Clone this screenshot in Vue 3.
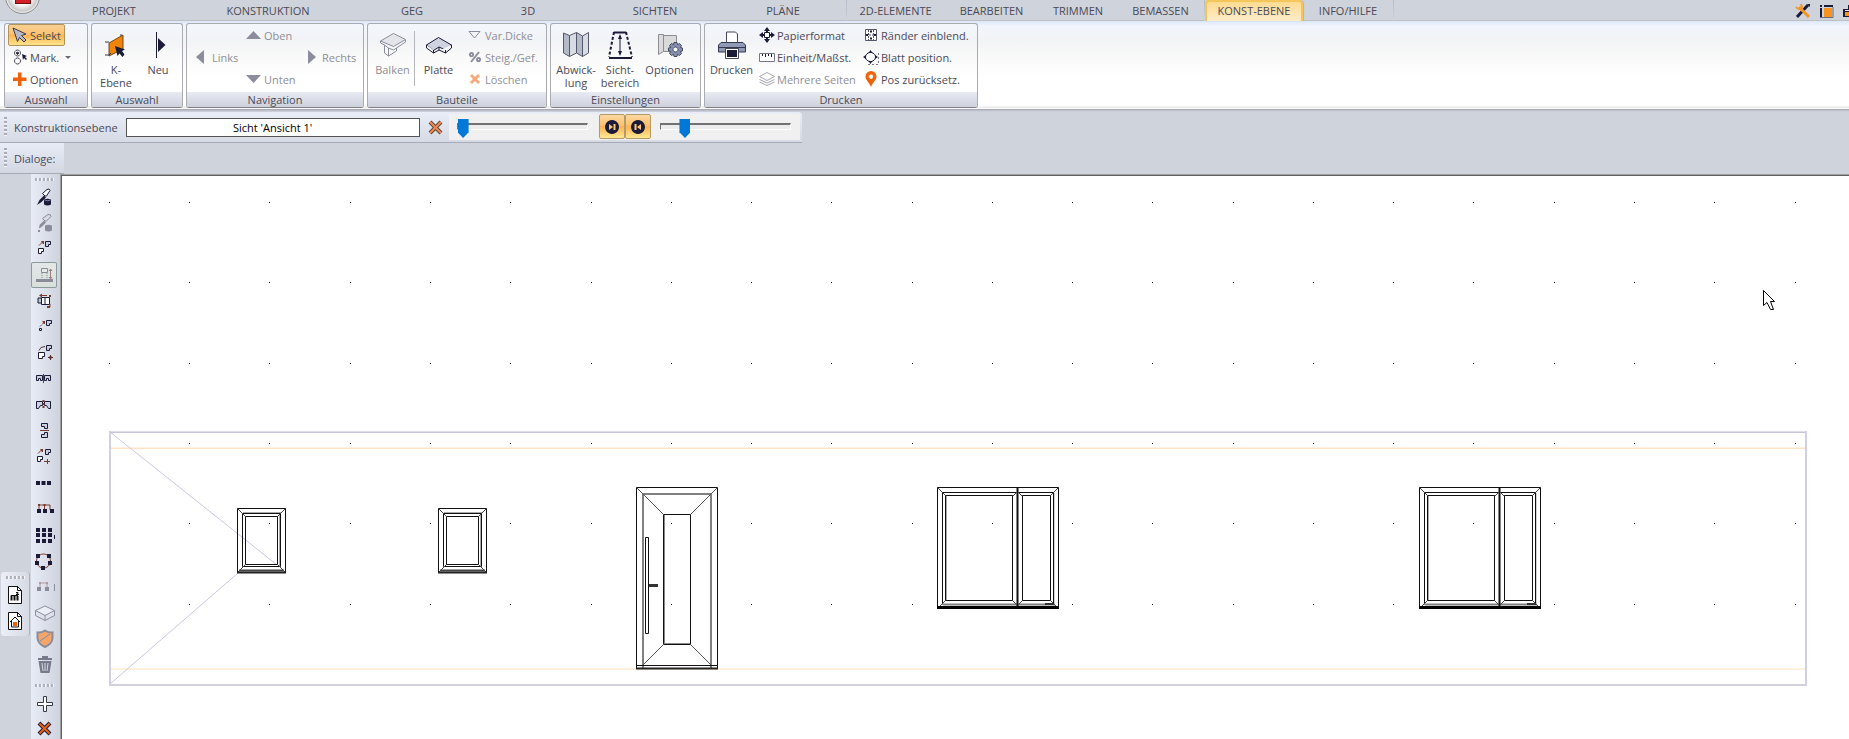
<script setup>
import { h, ref } from 'vue'

const N = '#1b1b38'
const G = '#8b8d9c'
const O = '#ee6309'
const B = '#7a3b2e'

/* Each icon is a list of [path, fill, stroke, stroke width, dash]. */
const sq = (x, y, s = 3) => `M${x} ${y}h${s}v${s}h${-s}z`
const cornerShape = (x, y, s = 5) => `M${x} ${y}h${s}v${s - 2}h-2v2h${-(s - 2)}z`

const icons = {
  /* ribbon, 16 x 16 */
  select: [['M1 1L14 7L9.5 8.5L14 13L12 15L7.5 10.5L5.5 14.5z', '#b9bac6', '#3a3a4a', 1]],
  mark: [
    ['M5.5 1a3 3 0 1 0 .01 0zM5.5 9a3 3 0 1 0 .01 0z', '#fff', '#4a4a5a', 1],
    ['M5.5 3.2a1 1 0 1 0 .01 0z', N, N, 1],
    ['M10 5l5 2l-2 1l2 2l-1 1l-2-2l-1 2z', N],
  ],
  plus: [['M6 1.500h3.500v5h5v3.500h-5v5h-3.500v-5h-5v-3.500h5z', O]],
  up: [['M0 12L7.5 4L15 12z', G]],
  down: [['M0 4h15L7.5 12z', G]],
  left: [['M10 1v14L2 8z', G]],
  right: [['M4 1v14L12 8z', G]],
  thickness: [['M2 4.5h11L7.5 11z', '#f4f4f6', G, 1]],
  percent: [
    ['M12 3L4 13', 'none', G, 2],
    ['M4.5 4a1.6 1.6 0 1 0 .01 0zM11.5 9a1.6 1.6 0 1 0 .01 0z', 'none', G, 2],
  ],
  del: [['M4 4L12 12M12 4L4 12', 'none', '#f5aa7c', 3]],
  paper: [
    ['M8 0l3 4h-6zM8 16l3-4h-6zM0 8l4-3v6zM16 8l-4-3v6z', N],
    ['M5.5 5.5h5v5h-5z', '#fff', N, 1],
    ['M7 2h2v3h-2zM7 11h2v3h-2zM2 7h3v2h-3zM11 7h3v2h-3z', N],
  ],
  ruler: [
    ['M.5 4.500h15v8h-15z', '#fff', '#77778a', 1],
    ['M3.500 5v2M6.500 5v3M9.500 5v2M12.500 5v3', 'none', N, 1],
  ],
  pages: [
    ['M8 1.500L15.500 5.500L8 9.500L.5 5.500z', '#fff', '#a5a6ae', 1],
    ['M.5 8.500L8 12L15.500 8.500M.5 11L8 14.500L15.500 11', 'none', '#a5a6ae', 1],
  ],
  margins: [
    ['M2.500 2.500h11v11h-11z', '#fff', '#55556a', 1],
    ['M5.500 3v10M10.500 3v10M3 8h10', 'none', '#55556a', 1, '2 1'],
    ['M8 3.500v2M8 10.500v2', 'none', N, 2],
    ['M3 8h2M11 8h2', 'none', N, 2],
  ],
  sheet: [
    ['M15.500 4v11.500h-12', 'none', '#77778a', 1, '2 2'],
    ['M7.500 3.500a5 4.500 0 1 0 .01 0z', '#fff', N, 1],
    ['M7.500 1l2 3h-4zM7.500 15l2-3h-4zM0 8l3-2v4zM15 8l-3-2v4z', N],
  ],
  pin: [
    ['M8 0a5.500 5.500 0 0 0-5.500 5.800C2.500 9 6.500 12 8 16C9.500 12 13.500 9 13.500 5.800A5.500 5.500 0 0 0 8 0z', O],
    ['M8 3.500a2.200 2.200 0 1 0 .01 0z', '#fff'],
  ],
  /* ribbon, 28 x 28 */
  plane: [
    ['M7 25V12L21 4V18z', '#ef8408', '#6b4a20', 1],
    ['M3 11h4M3 24h4L9 22M19 5V3', 'none', '#3a3a4a', 1],
    ['M13 15L23 18.500L20 20L22.500 23.500L20.500 26L17.500 22.500L15.500 25z', N],
  ],
  neu: [['M14 7L21.500 14L14 21z', N], ['M12.500 1V27', 'none', N, 1]],
  beam: [
    ['M1.500 10L14.500 2.500L26.500 8.500L14.500 15.500z', '#e4e5ea', G, 1],
    ['M1.500 10v2L5.500 14v8L9.500 25v-8L14.500 19L26.500 11v-2M9.500 25L17.500 20v-3M5.500 14l4 3', 'none', G, 1],
  ],
  slab: [
    ['M1.500 14L13.500 6.500L26.500 14L20.500 19L14 16L8.500 19.500z', '#cfd3e0', N, 1],
    ['M1.500 14v3L8.500 22v-3M8.500 22L14 19L20.500 22L26.500 17v-3M20.500 19v3M14 16v3', '#f5f5fa', N, 1],
  ],
  map: [
    ['M1.500 2L7.500 4.500V25.500L1.500 22zM14.500 1.500L20.500 5V25.500L14.500 22z', '#b4bac8', '#55586a', 1],
    ['M7.500 4.500L14.500 1.500V22L7.500 25.500zM20.500 5L26.500 1.500V22L20.500 25.500z', '#d8dce5', '#55586a', 1],
  ],
  range: [
    ['M8 1.500H20M3 27H26', 'none', N, 2],
    ['M8 1L3 26M20 1L26 26', 'none', N, 2, '3 2'],
    ['M14 5V23', 'none', N, 1],
    ['M14 3l2 5h-4zM14 25l2-5h-4z', N],
  ],
  gearpage: [
    ['M2.500 3.500h5v17l-5 3zM7.500 4.500h13v16h-13z', '#dadada', '#8c8c92', 1],
    ['M18 11.500h3l.5 2.200l2-1.200l2 2l-1.200 2l2.200.5v3l-2.200.5l1.200 2l-2 2l-2-1.200l-.5 2.200h-3l-.5-2.200l-2 1.200l-2-2l1.200-2l-2.200-.5v-3l2.200-.5l-1.200-2l2-2l2 1.200z', '#858fae', '#454a60', 1],
    ['M19.500 16a2.500 2.500 0 1 0 .01 0z', '#fff', '#454a60', 1],
  ],
  printer: [
    ['M8.500 12V1h9l2 2V12', '#fff', '#45485a', 1],
    ['M3 11.500h22l2.500 2.500v7h-27v-7z', '#8f9bb4', '#353850', 1],
    ['M1 16.500h26', 'none', '#353850', 1],
    ['M7.500 17.500h13v10h-13z', '#fff', '#45485a', 1],
    ['M9 19h10v7h-10z', N],
  ],
  /* palettes, 26 x 26 */
  pipette: [
    ['M6 21L8.500 16L13 11.500L15 13.500L10.500 18z', N],
    ['M14 12L11.500 9.500L16 5.500Q18.500 4 19 6.500L15.500 12z', '#fff', N, 1],
    ['M13 15.500q3.500-1.500 7 0v5q-3.500 2-7 0z', N],
    ['M13.500 16q3 1.500 6 0', 'none', '#8085a8', 1],
  ],
  pipetteOff: [
    ['M8 18.500L8.500 15L13 10.500L15 12.500L10.500 17zM7 20h2v2h-2z', G],
    ['M14 11L11.500 8.500L17 4.500Q20 4 20 6.500L15.500 11z', '#d8dae4', G, 1],
    ['M14 15.500q3.500-1.500 7 0v5q-3.500 2-7 0z', G],
  ],
  move: [
    [cornerShape(14.5, 5.5), '#c8cede', N, 1], [cornerShape(7.5, 12.5), '#fff', N, 1],
    ['M8 9.500L12 5.500', 'none', B, 1], ['M10 5h3v3h-1z', B],
  ],
  lift: [
    ['M10.500 6.500h6v4h-6z', '#e6e9ea', '#8a8d98', 1],
    ['M11 11v6M16 11v6', 'none', '#8a8d98', 1, '1 1'],
    ['M5 17h17v3h-17z', '#8a8d98'],
    ['M19.500 8v8M18 9l1.500-2l1.500 2M18 15l1.500 2l1.500-2', 'none', '#987c80', 1],
  ],
  stretch: [
    ['M10.500 9.500h8v7h-8z', '#fff', N, 1], ['M10 10h-3v5h3M14 9.500v7', '#b9c4d4', N, 1],
    ['M10 7.500h6M19 16v3', 'none', B, 1], ['M8 7.500l3-2v4zM19 18h-3v2h3zM18 7h2v2h-2z', B],
  ],
  copyOne: [
    [cornerShape(15.5, 6.5), '#c8cede', N, 1], [sq(8.5, 14.5, 2), '#fff', N, 1],
    ['M9 12.500L13 8.500', 'none', B, 1, '2 1'], ['M11 7h3v3h-1z', B],
  ],
  rotate: [
    [cornerShape(15.5, 5.5), '#c8cede', N, 1], [cornerShape(7.5, 12.5, 6), '#fff', N, 1],
    ['M8 10.500Q9 6.500 14 6.500M17 17.500h5M19.500 15v5', 'none', '#5b3030', 1],
    ['M18 16.500h3v2h-3z', '#5b3030'],
  ],
  mirror: [
    ['M5.500 9.500h6v5h-2v-2h-2v2h-2zM13.500 9.500h6v5h-2v-2h-2v2h-2z', '#cdd2e0', N, 1],
    ['M12.500 8v9', 'none', B, 1],
  ],
  mirrorCopy: [
    ['M5.500 9.500h6v4h-2l-2 3h-2zM13.500 9.500h6v7h-2l-2-3h-2z', '#cdd2e0', N, 1],
    ['M12.500 8v9', 'none', B, 2, '2 1'],
  ],
  flip: [
    ['M10.500 5.500h6v5h-3v-2h-3zM10.500 19.500h6v-5h-3v2h-3z', '#cdd2e0', N, 1],
    ['M9 12.500h9', 'none', B, 1],
  ],
  movePlus: [
    [cornerShape(14.5, 5.5), '#c8cede', N, 1], [cornerShape(6.5, 12.5), '#fff', N, 1],
    ['M7 9.500L11 5.500M13 17.500h6M16.500 15v5', 'none', B, 1], ['M9 5h3v3h-1z', B],
  ],
  rowOf: [[sq(6, 12, 2) + sq(11.5, 12, 2) + sq(17, 12, 2), '#fff', N, 2]],
  tree: [
    ['M8 14v-5h11v5M13.500 9v5', 'none', B, 1], [sq(7, 8, 2) + sq(12.5, 8, 2), B],
    [sq(7, 14, 2) + sq(13, 14, 2) + sq(20, 14, 2), '#fff', N, 2],
  ],
  matrix: [
    [[7, 12, 18].map(y => sq(6, y, 2) + sq(12, y, 2) + sq(18, y, 2)).join(''), '#d0d4e4', N, 2],
    ['M23.500 13v4', 'none', N, 1],
  ],
  ring: [
    ['M12.500 6a7 7 0 1 0 .01 0z', 'none', B, 1],
    [sq(5, 6, 4) + sq(16, 6, 4) + sq(4, 13, 4) + sq(17, 13, 4) + sq(10, 18, 4), N],
  ],
  treeOff: [
    ['M9 14v-5h7v5', 'none', '#b09aa0', 1], [sq(8, 8, 2) + sq(15, 8, 2), '#b09aa0'],
    [sq(7, 14, 2) + sq(15, 14, 2), '#fff', G, 2], ['M23.500 10v7', 'none', G, 1],
  ],
  block: [
    ['M4.500 10.500v5L14 20.500L23.500 15.500v-5M14 15.500v5', '#dfe2ec', G, 1],
    ['M4.500 10.500L14 6L23.500 10.500L14 15.500z', '#eceef5', G, 1],
  ],
  shield: [
    ['M14 4.500Q18 7 21.500 6.500V12Q21 18 14 21Q7 18 6.500 12V6.500Q10 7 14 4.500z', '#f3a56c', G, 2],
    ['M9 15L19 8', 'none', G, 1],
  ],
  trash: [
    ['M7.500 9h13l-2 12h-9zM7 6h14v2h-14zM11 4h6v2h-6z', '#777a8b'],
    ['M11 11l1 8M14 11v8M17 11l-1 8', 'none', '#d6d8e2', 1],
  ],
  cross: [['M12.500 6.500h3v6h6v3h-6v6h-3v-6h-6v-3h6z', '#fff', '#35364e', 1]],
  close: [['M8 7L19 18M19 7L8 18', 'none', N, 4], ['M8.500 7.500L18.500 17.500M18.500 7.500L8.500 17.500', 'none', O, 2]],
  area: [
    ['M6.500 4.500h9l4 4v13h-13z', '#fff', '#111', 1], ['M15.500 4v4.500h4', 'none', '#111', 1],
    ['M9.500 18.500v-5M12.500 14v4.500M15.500 14v4.500', 'none', '#111', 2],
    ['M9 13.500h7M14 10.500h2v1l-2 1h3', 'none', '#111', 1],
  ],
  house: [
    ['M6.500 4.500h9l4 4v13h-13z', '#fff', '#111', 1], ['M15.500 4v4.500h4', 'none', '#111', 1],
    ['M8 14L13 9L18 14M9.500 13v6h7v-6', 'none', '#111', 1], [sq(11, 14, 4), O],
  ],
  /* toolbar and title bar */
  removeX: [['M3 3L14 14M14 3L3 14', 'none', '#5a4a48', 4], ['M3 3L14 14M14 3L3 14', 'none', '#f08a4c', 2]],
  stepNext: [['M8 1a7 7 0 1 0 .01 0z', N], ['M5 5v6l4-3z', '#fdc672'], ['M10.500 5v6', 'none', '#fdc672', 2]],
  stepPrev: [['M8 1a7 7 0 1 0 .01 0z', N], ['M11 5v6l-4-3z', '#fdc672'], ['M5.500 5v6', 'none', '#fdc672', 2]],
  tools: [
    ['M2 14L13 2', 'none', N, 3], ['M12 1h3v3z', N],
    ['M4 4L14 14', 'none', '#f7931e', 3], ['M1 4q3 4 6 0l-1-3', 'none', '#f7931e', 2],
  ],
  layout: [
    ['M1 2h2v2h-2zM5 2h9v2h-9zM1 5h2v9h-2z', N], ['M5 5h8v9h-8z', '#f7931e'], ['M14 4v10.500h-13', 'none', '#6b6b80', 1],
  ],
  toolbox: [['M0 6h16v8h-16zM5 2h7v4h-2v-2h-3v2h-2z', N], ['M2 9h12v4h-12z', '#f7931e'], ['M2 7.500h12', 'none', '#e8e8ee', 1]],
}

const Icon = ({ name, size }) =>
  h('svg', { width: size, height: size, viewBox: `0 0 ${size} ${size}`, 'aria-hidden': 'true' },
    icons[name].map(([d, fill, stroke, w, dash]) =>
      h('path', { d, fill, stroke, 'stroke-width': w, 'stroke-dasharray': dash })))
Icon.props = ['name', 'size']

const tabs = ['PROJEKT', 'KONSTRUKTION', 'GEG', '3D', 'SICHTEN', 'PLÄNE', '2D-ELEMENTE', 'BEARBEITEN', 'TRIMMEN', 'BEMASSEN', 'KONST-EBENE', 'INFO/HILFE']
const activeTab = ref('KONST-EBENE')
const dividerAfter = ['PLÄNE', 'BEMASSEN', 'INFO/HILFE']

const partActions = [['thickness', 'Var.Dicke'], ['percent', 'Steig./Gef.'], ['del', 'Löschen']]
const printActions = [
  ['paper', 'Papierformat'], ['margins', 'Ränder einblend.'],
  ['ruler', 'Einheit/Maßst.'], ['sheet', 'Blatt position.'],
  ['pages', 'Mehrere Seiten', true], ['pin', 'Pos zurücksetz.'],
]
const palette = ['pipette', 'pipetteOff', 'move', 'lift', 'stretch', 'copyOne', 'rotate', 'mirror', 'mirrorCopy', 'flip', 'movePlus', 'rowOf', 'tree', 'matrix', 'ring', 'treeOff', 'block', 'shield', 'trash']

const levelName = ref("Sicht 'Ansicht 1'")
const sliderA = ref(0)
const sliderB = ref(16)

/* Snap points of the drawing, in canvas pixels. */
const dots = []
for (let j = 0; j < 7; j++)
  for (let i = 0; i < 22; i++)
    dots.push(`M${Math.round(46.9 + 80.27 * i)} ${Math.round(26.2 + 80.27 * j)}h1v1h-1z`)
const dotPath = dots.join('')
const smallWindows = [175, 376]
const largeWindows = [875, 1357]
</script>

<template>
  <div class="app">
    <header class="titlebar">
      <button class="orb" aria-label="Hauptmenü"><span></span></button>
      <nav class="tabs">
        <button v-for="t in tabs" :key="t" class="tab" :class="{ active: t === activeTab, divider: dividerAfter.includes(t) }" @click="activeTab = t">{{ t }}</button>
      </nav>
      <div class="quick">
        <button aria-label="Werkzeuge"><Icon name="tools" :size="16" /></button>
        <button aria-label="Ansicht"><Icon name="layout" :size="16" /></button>
        <button aria-label="Werkzeugkasten"><Icon name="toolbox" :size="16" /></button>
      </div>
    </header>

    <section class="ribbon">
      <div class="panel p-select">
        <div class="body rows">
          <button class="small selected"><Icon name="select" :size="16" />Selekt</button>
          <button class="small"><Icon name="mark" :size="16" />Mark.<i class="caret"></i></button>
          <button class="small"><Icon name="plus" :size="16" />Optionen</button>
        </div>
        <h2>Auswahl</h2>
      </div>

      <div class="panel p-level">
        <div class="body">
          <button class="large"><Icon name="plane" :size="28" /><span>K-<br>Ebene</span></button>
          <button class="large"><Icon name="neu" :size="28" /><span>Neu</span></button>
        </div>
        <h2>Auswahl</h2>
      </div>

      <div class="panel p-nav">
        <div class="body nav-grid">
          <button class="small n-up" disabled><Icon name="up" :size="16" />Oben</button>
          <button class="small n-left" disabled><Icon name="left" :size="16" />Links</button>
          <button class="small n-right" disabled><Icon name="right" :size="16" />Rechts</button>
          <button class="small n-down" disabled><Icon name="down" :size="16" />Unten</button>
        </div>
        <h2>Navigation</h2>
      </div>

      <div class="panel p-parts">
        <div class="body">
          <button class="large" disabled><Icon name="beam" :size="28" /><span>Balken</span></button>
          <i class="rule"></i>
          <button class="large"><Icon name="slab" :size="28" /><span>Platte</span></button>
          <div class="stack">
            <button v-for="[icon, label] in partActions" :key="icon" class="small" disabled><Icon :name="icon" :size="16" />{{ label }}</button>
          </div>
        </div>
        <h2>Bauteile</h2>
      </div>

      <div class="panel p-settings">
        <div class="body">
          <button class="large"><Icon name="map" :size="28" /><span>Abwick-<br>lung</span></button>
          <button class="large"><Icon name="range" :size="28" /><span>Sicht-<br>bereich</span></button>
          <button class="large wide"><Icon name="gearpage" :size="28" /><span>Optionen</span></button>
        </div>
        <h2>Einstellungen</h2>
      </div>

      <div class="panel p-print">
        <div class="body">
          <button class="large"><Icon name="printer" :size="28" /><span>Drucken</span></button>
          <div class="print-grid">
            <button v-for="[icon, label, off] in printActions" :key="icon" class="small" :disabled="off"><Icon :name="icon" :size="16" />{{ label }}</button>
          </div>
        </div>
        <h2>Drucken</h2>
      </div>
    </section>

    <div class="toolbar level-bar">
      <i class="grip"></i>
      <label for="level">Konstruktionsebene</label>
      <input id="level" v-model="levelName" class="level" type="text">
      <button class="clear" aria-label="Ebene schließen"><Icon name="removeX" :size="17" /></button>
      <div class="sliders">
        <input v-model="sliderA" type="range" min="0" max="100" aria-label="Vordere Sichttiefe">
        <div class="steps">
          <button aria-label="Weiter"><Icon name="stepNext" :size="16" /></button>
          <button aria-label="Zurück"><Icon name="stepPrev" :size="16" /></button>
        </div>
        <input v-model="sliderB" type="range" min="0" max="100" aria-label="Hintere Sichttiefe">
      </div>
    </div>

    <div class="toolbar dialog-bar">
      <i class="grip"></i>
      <span>Dialoge:</span>
    </div>

    <main class="work">
      <div class="dock">
        <div class="side">
          <i class="hgrip"></i>
          <button aria-label="Flächen"><Icon name="area" :size="26" /></button>
          <button aria-label="Gebäude"><Icon name="house" :size="26" /></button>
        </div>
      </div>
      <div class="palette">
        <i class="hgrip"></i>
        <button v-for="p in palette" :key="p" :class="{ on: p === 'lift' }" :aria-label="p"><Icon :name="p" :size="26" /></button>
        <i class="hgrip second"></i>
        <button aria-label="Hinzufügen"><Icon name="cross" :size="26" /></button>
        <button aria-label="Abbrechen"><Icon name="close" :size="26" /></button>
      </div>
      <div class="canvas">
        <svg class="drawing" role="img" aria-label="Ansicht 1">
          <path :d="dotPath" fill="#000" />
          <g fill="none">
            <path d="M49 271.500H1743" stroke="#fff1e2" /><path d="M49 272.500H1743" stroke="#ffe3c6" />
            <path d="M49 493H1743" stroke="#ffefdc" stroke-width="2" />
            <path d="M47 255.500H1745" stroke="#dfdfe6" /><path d="M47 256.500H1745" stroke="#c6c6d8" />
            <path d="M47 509H1745" stroke="#d3d0d9" stroke-width="2" />
            <path d="M48 255V510M1744 255V510" stroke="#d0cfe5" stroke-width="2" />
            <path d="M48 256L215 389M48 508L176 397" stroke="#c9c8e2" />
          </g>
          <g v-for="x in smallWindows" :key="x" :transform="`translate(${x} 332)`" fill="none" stroke="#111">
            <path d="M.5.500h48v64h-48zM5.500 5.500h38v53h-38zM8.500 8.500h32v48h-32z" />
            <path d="M42.500 6v52M6 4.500h38" stroke="#aaa" />
            <path d="M0 0L9 9M49 0L40 9M0 65L9 56M49 65L40 56" stroke="#444" />
            <path d="M2 62.500h45" stroke="#444" stroke-width="2" />
            <path d="M0 64.500h49" stroke="#222" stroke-width="2" />
          </g>
          <g transform="translate(574 311)" fill="none" stroke="#111">
            <path d="M7 8V182M75 8V182M6 7H76" stroke="#808080" stroke-width="2" />
            <path d="M.5.500h81v181h-81zM27.500 27.500h27v130h-27zM9.500 50.500h3v96h-3zM0 178.500h82" />
            <path d="M28.500 28v129M28 156.500h26" stroke="#888" />
            <path d="M0 0L28 28M82 0L54 28M7 178L28 157M75 178L54 157" stroke="#555" />
            <path d="M13 98.500h9" stroke="#333" stroke-width="3" />
            <path d="M0 181.500h82" stroke="#222" stroke-width="2" />
          </g>
          <g v-for="x in largeWindows" :key="x" :transform="`translate(${x} 311)`" fill="none" stroke="#111">
            <path d="M6 117.500h112" stroke="#808080" stroke-width="2" />
            <path d="M9.500 8v106M75.500 8v106M85.500 8v106M117 6v112M121.500 0v120" stroke="#aaa" />
            <path d="M.5.500h121v120h-121zM5.500 5.500h111v112M5.500 5.500v112M8.500 8.500h67v105h-67zM85.500 8.500h28v105h-28z" />
            <path d="M80.500 0v122" stroke-width="2" />
            <path d="M0 0L9 9M122 0L113 9M0 122L9 113M122 122L113 113M76 9L80 5M85 9L81 5M76 114L80 118M85 114L81 118" stroke="#444" />
            <path d="M0 120.500h122" stroke="#000" stroke-width="3" />
            <path d="M108 117h9" stroke="#333" stroke-width="2" />
          </g>
          <path class="pointer" d="M1701.500 114.500V129.500L1705 126.500L1708.500 133.500H1711.500L1708.500 125.500H1712.500z" fill="#fff" stroke="#000" />
        </svg>
      </div>
    </main>
  </div>
</template>

<style>
html, body { margin: 0; overflow: hidden; }
</style>

<style scoped>
.app {
  display: flex;
  flex-direction: column;
  height: 100vh;
  overflow: hidden;
  background: #cfd3dc;
  color: #4a4a58;
  font: 11px/13px "Open Sans", "Noto Sans", sans-serif;
}
button {
  margin: 0;
  padding: 0;
  border: 0;
  background: none;
  color: inherit;
  font: inherit;
}
button:disabled { color: #8e8e96; }
svg { display: block; flex: none; }

.titlebar {
  display: flex;
  position: relative;
  height: 20px;
  flex: none;
  border-bottom: 1px solid #c0bfc1;
}
.orb {
  position: absolute;
  z-index: 2;
  left: 5px;
  top: -21px;
  display: flex;
  align-items: flex-end;
  justify-content: center;
  width: 35px;
  height: 35px;
  border: 1px solid #8c8c8c;
  border-radius: 50%;
  background: radial-gradient(circle, #fff 35%, #c9c9c9 62%, #f6f6f6 72%);
  padding-bottom: 9px;
}
.orb span {
  box-sizing: border-box;
  width: 16px;
  height: 16px;
  border: 1px solid #6b0f12;
  background: #d51f26;
}
.tabs {
  display: grid;
  grid-template-columns: 128px 180px 108px 124px 130px 127px 97px 95px 78px 88px 98px 91px;
  padding-left: 50px;
}
.tab {
  height: 21px;
  white-space: nowrap;
  color: #4a4a55;
}
.tab.divider {
  border-right: 1px solid;
  border-image: linear-gradient(#b4b9c6, #cfd3dc) 1;
}
.tab.active {
  border: 2px solid #f5c65b;
  border-bottom: 0;
  border-radius: 4px 4px 0 0;
  padding-bottom: 2px;
  background: linear-gradient(#fddb90, #fdecca);
  box-shadow: 1px 0 1px #b8b4a8;
}
.quick {
  display: flex;
  gap: 8px;
  margin-left: auto;
  margin-right: -10px;
  padding-top: 1px;
}

.ribbon {
  display: flex;
  gap: 3px;
  flex: none;
  padding: 2px 4px 1px;
  background: linear-gradient(#dbe7f8, #f1f6fd 5px, #f2f3f6 18px, #f9f9f9 35px, #fff 55px, #fff 85px, #e6e6e6 86px, #fff 88px);
  border-bottom: 1px solid #a9acb5;
  box-shadow: 0 1px 1px #bbbfc9;
}
.panel {
  box-sizing: border-box;
  border: 1px solid #a9abb0;
  border-bottom-color: #7f8186;
  border-radius: 3px;
  background: linear-gradient(#f3f7fd, #f2f3f6 15px, #f9f9f9 32px, #fff 52px);
  overflow: hidden;
}
.panel h2 {
  margin: 0;
  height: 15px;
  background: linear-gradient(#e9ebf3, #cdd1dc);
  font: inherit;
  line-height: 16px;
  text-align: center;
}
.body { display: flex; box-sizing: border-box; height: 68px; padding: 0 3px 2px; }
.rows { flex-direction: column; align-items: flex-start; }
.stack { display: flex; flex-direction: column; }
.p-select { width: 84px; }
.p-level { width: 92px; }
.p-nav { width: 178px; }
.p-parts { width: 180px; }
.p-settings { width: 151px; }
.p-print { width: 274px; }

.small {
  display: flex;
  align-items: center;
  gap: 2px;
  box-sizing: border-box;
  height: 22px;
  white-space: nowrap;
}
.rows .small { padding: 0 3px; border: 1px solid transparent; }
.rows .selected {
  border-color: #b4935a;
  border-radius: 2px;
  background: linear-gradient(#f6cf94, #fdc373 45%, #fdb652 50%, #ffe28a);
}
.caret {
  margin-left: 4px;
  border: 3px solid transparent;
  border-top-color: #6a6a75;
  border-bottom: 0;
}
.large {
  display: flex;
  flex: 1;
  flex-direction: column;
  align-items: center;
  gap: 4px;
  padding-top: 7px;
}
.nav-grid {
  display: grid;
  grid-template: repeat(3, 22px) / 52px 58px 1fr;
  padding: 0 0 2px 7px;
}
.n-up { grid-area: 1 / 2; }
.n-left { grid-area: 2 / 1; }
.n-right { grid-area: 2 / 3; }
.n-down { grid-area: 3 / 2; }
.p-parts .large { flex: 0 0 43px; }
.rule { width: 1px; margin: 7px 2px 4px 0; background: #b5b6bb; }
.p-parts .stack { margin-left: 7px; }
.p-settings .wide { flex: 0 0 55px; }
.p-print .large { flex: 0 0 47px; }
.print-grid {
  display: grid;
  grid-template: repeat(3, 22px) / 104px auto;
  padding-left: 4px;
}

.toolbar {
  display: flex;
  align-items: center;
  box-sizing: border-box;
  flex: none;
  align-self: flex-start;
  border-bottom: 1px solid #a6aab6;
  background: linear-gradient(#e8ecf6, #d3d7e1);
}
.level-bar { height: 31px; margin-top: 2px; padding-right: 2px; border-radius: 0 4px 0 0; background: linear-gradient(#e8edf7, #d6dae4); }
.dialog-bar { height: 31px; padding-right: 9px; }
.grip {
  width: 3px;
  height: 20px;
  margin: 0 7px 0 4px;
  background: repeating-linear-gradient(#a9acb5 0 2px, #f2f4f8 2px 3px, transparent 3px 4px);
}
.level {
  box-sizing: border-box;
  width: 294px;
  height: 19px;
  margin-left: 8px;
  padding: 0;
  border: 1px solid #555;
  background: #fff;
  color: #000;
  font: inherit;
  text-align: center;
}
.clear { margin: 0 5px 0 7px; }
.sliders {
  display: flex;
  align-items: center;
  height: 26px;
  padding: 0 9px 0 8px;
  background: #f0f0f0;
  margin-bottom: 1px;
}
.steps { display: flex; margin: 0 9px 0 11px; }
.steps button {
  display: flex;
  align-items: center;
  justify-content: center;
  width: 26px;
  height: 25px;
  border: 1px solid #b39a66;
  border-radius: 2px;
  background: linear-gradient(#fbd9a4, #fdc06a 45%, #fcb352 50%, #ffe892);
}
input[type="range"] {
  appearance: none;
  width: 131px;
  height: 19px;
  margin: 0;
  background: none;
}
input[type="range"]::-webkit-slider-runnable-track {
  box-sizing: border-box;
  height: 7px;
  border: 1px solid #fff;
  border-top: 2px solid #727272;
  border-left-color: #727272;
  background: #ececec;
}
input[type="range"]::-webkit-slider-thumb {
  appearance: none;
  width: 11px;
  height: 19px;
  margin-top: -6px;
  background: #0078d7;
  clip-path: polygon(0 0, 100% 0, 100% 70%, 50% 100%, 0 70%);
}

.work { display: flex; flex: 1; min-height: 0; }
.dock { width: 31px; flex: none; }
.side {
  display: flex;
  flex-direction: column;
  align-items: center;
  margin: 398px 1px 0;
  padding-bottom: 2px;
  border-right: 1px solid #b0b3bd;
  border-radius: 3px;
  background: linear-gradient(90deg, #eceff7, #d6dae4);
}
.palette {
  display: flex;
  flex: none;
  flex-direction: column;
  align-items: flex-start;
  width: 29px;
  background: linear-gradient(90deg, #e8ecf6, #cfd3dd);
}
.palette button { box-sizing: border-box; width: 26px; height: 26px; flex: none; }
.palette .on { box-shadow: inset 0 0 0 1px #8d9a9c; border-radius: 2px; background: linear-gradient(#e3e8e6, #d8dfdb); }
.hgrip {
  width: 19px;
  height: 3px;
  flex: none;
  margin: 4px 0 3px;
  background: repeating-linear-gradient(90deg, #aeb1ba 0 2px, #f6f7fa 2px 3px, transparent 3px 4px);
}
.palette .hgrip { margin-left: 4px; }
.palette .second { margin-top: 6px; }
.canvas {
  box-sizing: border-box;
  flex: 1;
  min-width: 0;
  border: solid #5f615f;
  border-width: 1px 0 0 1px;
  outline: 1px solid #9c9e9f;
  margin: 1px 0 0 1px;
  background: #fff;
  overflow: hidden;
}
.drawing { width: 100%; height: 100%; }
</style>
